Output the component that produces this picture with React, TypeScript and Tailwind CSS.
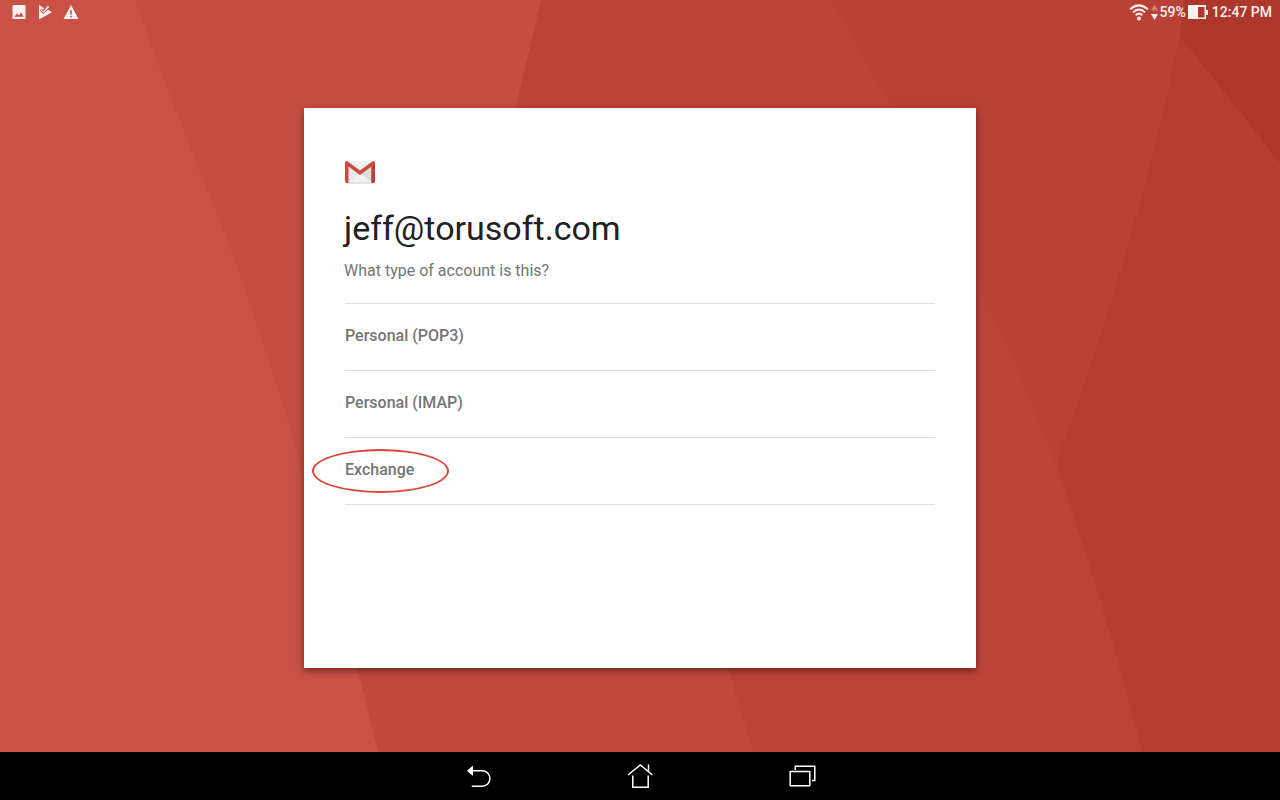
const accountTypes = [
  { id: 'pop3', label: 'Personal (POP3)' },
  { id: 'imap', label: 'Personal (IMAP)' },
  { id: 'exchange', label: 'Exchange', highlighted: true },
]

function Backdrop() {
  return (
    <svg
      className="absolute inset-0 h-full w-full"
      viewBox="0 0 1280 752"
      preserveAspectRatio="none"
      aria-hidden="true"
    >
      <rect width="1280" height="752" fill="#c54d42" />
      <path d="M330 500H800V752H330Z" fill="#c1483c" />
      <path d="M541 0H1280V752H753Q735 690 728 668L480 260Z" fill="#bc4338" />
      <path d="M832 0H1280V752H1142Q1110 625 1084 550Q1045 420 976 280L892 108Z" fill="#b94136" />
      <path d="M1184 0H1280V752H1142Q1110 625 1057 462Q1138 240 1180 36Z" fill="#b63d32" />
      <path d="M1184 0H1280V163L1180 36Z" fill="#ae372c" />
      <path d="M0 0H135Q180 125 224 230C285 395 345 610 378 752H0Z" fill="#c95146" />
    </svg>
  )
}

function GmailLogo() {
  return (
    <svg className="block" width="32" height="24" viewBox="0 0 32 24" role="img" aria-label="Gmail">
      <path d="M3 1H29V23H3Z" fill="#e9e9e9" />
      <path d="M5 23L16 13L27 23Z" fill="#f3f3f3" />
      <path d="M5 5L16 13L29 23V6L16 14Z" fill="#dedede" />
      <path d="M3 1H29L16 10Z" fill="#f1f1f1" />
      <path d="M3 23H29" stroke="#cfcfcf" strokeWidth="1" />
      <path d="M1 3V21Q1 23 3 23H4.500V6.500L16 15L27.500 6.500V23H29Q31 23 31 21V3Q31 1 29 1L16 10.500L3 1Q1 1 1 3Z" fill="#cb4a40" />
      <path d="M27.500 6.500V23H29Q31 23 31 21V4Z" fill="#b94238" />
    </svg>
  )
}

function StatusBar() {
  return (
    <header className="relative flex h-6 items-center justify-between px-2 text-[14px] leading-6 font-medium text-[#fdf0ee]">
      <div className="flex items-center gap-2 px-[2px]">
        <svg width="18" height="18" viewBox="0 0 18 18" fill="currentColor" aria-label="Screenshot saved">
          <path fillRule="evenodd" d="M3.500 2H14.500Q15.500 2 15.500 3V15Q15.500 16 14.500 16H3.500Q2.500 16 2.500 15V3Q2.500 2 3.500 2ZM4.200 13.800H13.800L11 9.500L9 12.500L7 10.500Z" />
        </svg>
        <svg width="18" height="18" viewBox="0 0 18 18" fill="currentColor" aria-label="Apps updated">
          <path d="M3 2L8.300 5.200L6.600 7L5.200 5.800L3.800 7.400L7.200 10.600L11.800 6.600L16 9.200L4 16Q3 16 3 15Z" />
          <path d="M5.400 6.600L7.400 8.600L11.800 2.800L13.300 4L7.500 10.300L4.200 7.600Z" />
          <path d="M4.600 7.800L7.300 10.500L13 5" fill="none" stroke="#b5473d" strokeWidth="1" />
        </svg>
        <svg width="18" height="18" viewBox="0 0 18 18" fill="currentColor" aria-label="Warning">
          <path fillRule="evenodd" d="M9 2L16.500 16H1.500ZM8.200 7.200V11.500H9.800V7.200ZM8.200 12.800V14.500H9.800V12.800Z" />
        </svg>
      </div>
      <div className="flex items-center">
        <svg width="20" height="18" viewBox="0 0 20 18" fill="none" stroke="currentColor" strokeWidth="2" aria-label="Wi-Fi">
          <path d="M1 6.300Q10-1.600 19 6.300" />
          <path d="M3.900 9.400Q10 3.600 16.100 9.400" />
          <path d="M6.700 12.300Q10 9 13.300 12.300" />
          <circle cx="10" cy="15.500" r="2" fill="currentColor" stroke="none" />
        </svg>
        <svg className="mx-[2px]" width="7" height="18" viewBox="0 0 7 18" aria-hidden="true">
          <path d="M3.500 1.500L7 7.500H0Z" fill="#d68078" />
          <path d="M0 11H7L3.500 17Z" fill="currentColor" />
        </svg>
        <span>59%</span>
        <svg className="ml-[2px]" width="20" height="16" viewBox="0 0 20 16" fill="currentColor" aria-label="Battery">
          <path fillRule="evenodd" d="M0 1H18V6H20V11H18V15H0ZM10 3V13.500H16.500V3Z" />
        </svg>
        <span className="ml-1">12:47 PM</span>
      </div>
    </header>
  )
}

function NavBar() {
  const button = 'flex h-12 w-[162px] items-center justify-center'

  return (
    <nav className="flex h-12 justify-center bg-black text-white">
      <button type="button" className={button} aria-label="Back">
        <svg width="28" height="28" viewBox="0 0 28 28" fill="none" stroke="currentColor" strokeWidth="1.500">
          <path d="M7 8.800H18.200A7.500 7.500 0 0 1 18.200 24.200H7.800" />
          <path d="M3 8.800L9 3.500V14Z" fill="currentColor" stroke="none" />
        </svg>
      </button>
      <button type="button" className={button} aria-label="Home">
        <svg width="28" height="28" viewBox="0 0 28 28" fill="none" stroke="currentColor" strokeWidth="1.500">
          <path d="M2 13L14.300 3L26.500 13" />
          <path d="M22.500 2.500V9.500" />
          <path d="M6.800 13.500V25.200H22.200V13.500" />
        </svg>
      </button>
      <button type="button" className={button} aria-label="Recent apps">
        <svg width="28" height="28" viewBox="0 0 28 28" fill="none" stroke="currentColor" strokeWidth="1.500">
          <path d="M2.200 9.500H21.800V23.800H2.200Z" />
          <path d="M7.200 8V4.300H26.800V18.500H24" />
        </svg>
      </button>
    </nav>
  )
}

export default function App() {
  return (
    <div className="flex min-h-screen flex-col font-['Roboto',sans-serif]">
      <div className="relative flex flex-1 flex-col">
        <Backdrop />
        <StatusBar />

        <main className="relative flex flex-1 items-center justify-center">
          <section className="min-h-[560px] w-full max-w-2xl bg-white px-10 pt-[52px] pb-10 shadow-[0_3px_7px_rgba(60,10,5,0.55)]">
            <GmailLogo />
            <h1 className="mt-5 text-[34px] leading-[48px] text-[#212121]">jeff@torusoft.com</h1>
            <p className="mt-[7px] text-[16px] leading-6 text-[#757575]">What type of account is this?</p>

            <ul className="mx-px mt-5 border-t border-[#dedede]">
              {accountTypes.map((type) => (
                <li key={type.id} className="relative border-b border-[#dedede]">
                  <button
                    type="button"
                    className="block h-[66px] w-full pb-[2px] text-left text-[16px] leading-6 font-medium text-[#757575]"
                  >
                    {type.label}
                  </button>
                  {type.highlighted && (
                    <span className="pointer-events-none absolute top-[11px] -left-[33px] h-11 w-[137px] rounded-[50%] border-2 border-[#dc473c]" />
                  )}
                </li>
              ))}
            </ul>
          </section>
        </main>
      </div>

      <NavBar />
    </div>
  )
}
